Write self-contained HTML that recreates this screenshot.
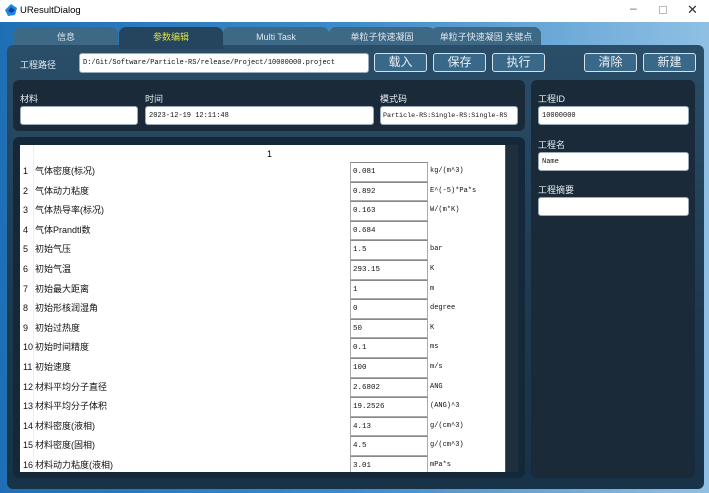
<!DOCTYPE html>
<html><head><meta charset="utf-8"><style>
*{margin:0;padding:0;box-sizing:border-box}
body{width:709px;height:493px;overflow:hidden;position:relative;font-family:"Liberation Sans","Noto Sans CJK SC",sans-serif;background:linear-gradient(90deg,#1f6fb6 0%,#3f8bc9 50%,#8fc0e4 100%)}
.a{position:absolute}
.title{left:0;top:0;width:709px;height:22px;background:#fff;font-size:9.5px;color:#000}
.tab{top:27px;height:20px;border-radius:7px 7px 0 0;background:#3d6886;color:#dfe8ee;font-size:9px;text-align:center;line-height:20px}
.main{left:7px;top:45px;width:697px;height:444px;border-radius:6px;background:linear-gradient(180deg,#2a4e69 0%,#1c3950 60%,#183248 100%)}
.panel{background:#1a2a38;border-radius:6px}
.in{background:#fff;border-radius:3px;border:1px solid #9ab;font-family:"Liberation Mono",monospace;font-size:7px;color:#111;padding-left:3px;display:flex;align-items:center;white-space:nowrap;overflow:hidden}
.lbl{color:#e6eef3;font-size:9px}
.btn{top:53px;height:19px;border:1.5px solid #d5e2ea;border-radius:3px;background:#3a6889;color:#e8f0f5;font-size:12px;text-align:center;line-height:16px}
.row{left:20px;width:485px;height:19.6px;font-size:9px;color:#111;line-height:19.6px}
.row .n{position:absolute;left:3px;top:0}
.row .l{position:absolute;left:15px;top:0}
.row .v{position:absolute;left:330px;top:0;width:78px;height:19.6px;border:1px solid #aaa;border-top:1px solid #888;font-family:"Liberation Mono",monospace;font-size:7.5px;padding-left:2px;line-height:18px}
.row .u{position:absolute;left:410px;top:0;font-family:"Liberation Mono",monospace;font-size:7px}
</style></head><body>
<div class="a title"><svg class="a" style="left:5px;top:4px" width="12" height="12"><polygon points="6,0 12,4 10,11 3,12 0,6" fill="#1e88e5"/><polygon points="6,3 10,6 7,9 3,7" fill="#0d47a1"/></svg><span class="a" style="left:20px;top:5px">UResultDialog</span>
<span class="a" style="left:630px;top:1px;font-size:12px;color:#666">–</span><span class="a" style="left:659px;top:6px;width:8px;height:8px;border:1px solid #bbb"></span><span class="a" style="left:687px;top:2px;font-size:13px;color:#333">✕</span></div>
<div class="a tab" style="left:14px;width:104px">信息</div>
<div class="a tab" style="left:223px;width:106px">Multi Task</div>
<div class="a tab" style="left:329px;width:106px">单粒子快速凝固</div>
<div class="a tab" style="left:431px;width:110px">单粒子快速凝固 关键点</div>
<div class="a main"></div>
<div class="a tab" style="left:119px;width:104px;height:22px;background:#25455f;color:#d8e040">参数编辑</div>
<div class="a lbl" style="left:20px;top:58px">工程路径</div>
<div class="a in" style="left:79px;top:53px;width:290px;height:20px">D:/Git/Software/Particle-RS/release/Project/10000000.project</div>
<div class="a btn" style="left:374px;width:53px">载入</div>
<div class="a btn" style="left:433px;width:53px">保存</div>
<div class="a btn" style="left:492px;width:53px">执行</div>
<div class="a btn" style="left:584px;width:53px">清除</div>
<div class="a btn" style="left:643px;width:53px">新建</div>
<div class="a panel" style="left:13px;top:80px;width:512px;height:51px"></div>
<div class="a lbl" style="left:20px;top:92px">材料</div>
<div class="a lbl" style="left:145px;top:92px">时间</div>
<div class="a lbl" style="left:380px;top:92px">模式码</div>
<div class="a in" style="left:20px;top:106px;width:118px;height:19px"></div>
<div class="a in" style="left:145px;top:106px;width:229px;height:19px">2023-12-19 12:11:48</div>
<div class="a in" style="left:380px;top:106px;width:138px;height:19px;font-size:6.7px;padding-left:2px">Particle-RS:Single-RS:Single-RS</div>
<div class="a panel" style="left:531px;top:80px;width:164px;height:398px"></div>
<div class="a lbl" style="left:538px;top:92px">工程ID</div>
<div class="a in" style="left:538px;top:106px;width:151px;height:19px">10000000</div>
<div class="a lbl" style="left:538px;top:138px">工程名</div>
<div class="a in" style="left:538px;top:152px;width:151px;height:19px">Name</div>
<div class="a lbl" style="left:538px;top:183px">工程摘要</div>
<div class="a in" style="left:538px;top:197px;width:151px;height:19px"></div>
<div class="a panel" style="left:13px;top:137px;width:512px;height:341px;background:#15283a"></div>
<div class="a" style="left:20px;top:145px;width:485px;height:327px;background:#fff"></div>
<div class="a" style="left:33px;top:145px;width:1px;height:327px;background:#eee"></div>
<div class="a" style="left:505px;top:145px;width:13px;height:327px;background:#1e2f3d;border-left:1px solid #456"></div>
<div class="a" style="left:267px;top:149px;font-size:9px">1</div>
<div class="a row" style="top:162px"><span class="n">1</span><span class="l">气体密度(标况)</span><span class="v">0.081</span><span class="u">kg/(m^3)</span></div>
<div class="a row" style="top:181.6px"><span class="n">2</span><span class="l">气体动力粘度</span><span class="v">0.892</span><span class="u">E^(-5)*Pa*s</span></div>
<div class="a row" style="top:201.2px"><span class="n">3</span><span class="l">气体热导率(标况)</span><span class="v">0.163</span><span class="u">W/(m*K)</span></div>
<div class="a row" style="top:220.8px"><span class="n">4</span><span class="l">气体Prandtl数</span><span class="v">0.684</span><span class="u"></span></div>
<div class="a row" style="top:240.4px"><span class="n">5</span><span class="l">初始气压</span><span class="v">1.5</span><span class="u">bar</span></div>
<div class="a row" style="top:260px"><span class="n">6</span><span class="l">初始气温</span><span class="v">293.15</span><span class="u">K</span></div>
<div class="a row" style="top:279.6px"><span class="n">7</span><span class="l">初始最大距离</span><span class="v">1</span><span class="u">m</span></div>
<div class="a row" style="top:299.2px"><span class="n">8</span><span class="l">初始形核润湿角</span><span class="v">0</span><span class="u">degree</span></div>
<div class="a row" style="top:318.8px"><span class="n">9</span><span class="l">初始过热度</span><span class="v">50</span><span class="u">K</span></div>
<div class="a row" style="top:338.4px"><span class="n">10</span><span class="l">初始时间精度</span><span class="v">0.1</span><span class="u">ms</span></div>
<div class="a row" style="top:358px"><span class="n">11</span><span class="l">初始速度</span><span class="v">100</span><span class="u">m/s</span></div>
<div class="a row" style="top:377.6px"><span class="n">12</span><span class="l">材料平均分子直径</span><span class="v">2.6802</span><span class="u">ANG</span></div>
<div class="a row" style="top:397.2px"><span class="n">13</span><span class="l">材料平均分子体积</span><span class="v">19.2526</span><span class="u">(ANG)^3</span></div>
<div class="a row" style="top:416.8px"><span class="n">14</span><span class="l">材料密度(液相)</span><span class="v">4.13</span><span class="u">g/(cm^3)</span></div>
<div class="a row" style="top:436.4px"><span class="n">15</span><span class="l">材料密度(固相)</span><span class="v">4.5</span><span class="u">g/(cm^3)</span></div>
<div class="a row" style="top:456px;height:16px;overflow:hidden"><span class="n">16</span><span class="l">材料动力粘度(液相)</span><span class="v">3.01</span><span class="u">mPa*s</span></div>
</body></html>
